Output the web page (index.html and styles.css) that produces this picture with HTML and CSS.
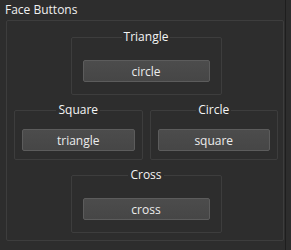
FILE: index.html
```html
<!DOCTYPE html>
<html lang="en">
<head>
    <meta charset="UTF-8">
    <title>Face Buttons</title>
    <link rel="stylesheet" href="styles.css">
</head>
<body>

<div class="panel">
    <div class="panel-title">Face Buttons</div>
    <div class="outer">
        <div class="group group-wide">
            <span class="group-title">Triangle</span>
            <button class="map-btn">circle</button>
        </div>
        <div class="row">
            <div class="group group-half">
                <span class="group-title">Square</span>
                <button class="map-btn">triangle</button>
            </div>
            <div class="group group-half">
                <span class="group-title">Circle</span>
                <button class="map-btn">square</button>
            </div>
        </div>
        <div class="group group-wide">
            <span class="group-title">Cross</span>
            <button class="map-btn">cross</button>
        </div>
    </div>
</div>

</body>
</html>
```

FILE: styles.css
```css
body {
    margin: 0;
    padding: 0;
    background-color: #2d2d2d;
    font-family: 'Open Sans', 'Noto Sans', sans-serif;
    font-size: 12px;
    color: #f0f0f0;
}
.panel {
    width: 286px;
    height: 250px;
    box-sizing: border-box;
    border-right: 1px solid #1e1e1e;
}
.panel-title {
    height: 20px;
    line-height: 20px;
    padding-left: 5px;
    box-sizing: border-box;
}
.outer {
    margin-left: 6px;
    width: 278px;
    height: 221px;
    box-sizing: border-box;
    border: 1px solid #3d3d3d;
    border-radius: 2px;
    padding: 16px 5px 0 7px;
    display: flex;
    flex-direction: column;
    gap: 15px;
}
.row {
    display: flex;
    gap: 7px;
}
.group {
    border: 1px solid #3d3d3d;
    border-radius: 2px;
    box-sizing: border-box;
    display: flex;
    flex-direction: column;
    align-items: stretch;
}
.group-wide {
    width: 151px;
    height: 58px;
    align-self: center;
    padding: 0 11px;
}
.group-half {
    flex: 1;
    height: 50px;
    padding: 0 7px;
}
.group-title {
    align-self: center;
    margin-top: -8px;
    height: 14px;
    line-height: 14px;
    padding: 0 2px;
    background-color: #2d2d2d;
    color: #f4f4f4;
}
.map-btn {
    height: 22px;
    margin-top: 16px;
    border: 1px solid #5c5c5c;
    border-radius: 2px;
    background: linear-gradient(#4c4c4c, #464646);
    color: #ececec;
    font-family: inherit;
    font-size: 12px;
    padding: 0;
}
.group-half .map-btn {
    margin-top: 12px;
}
```
